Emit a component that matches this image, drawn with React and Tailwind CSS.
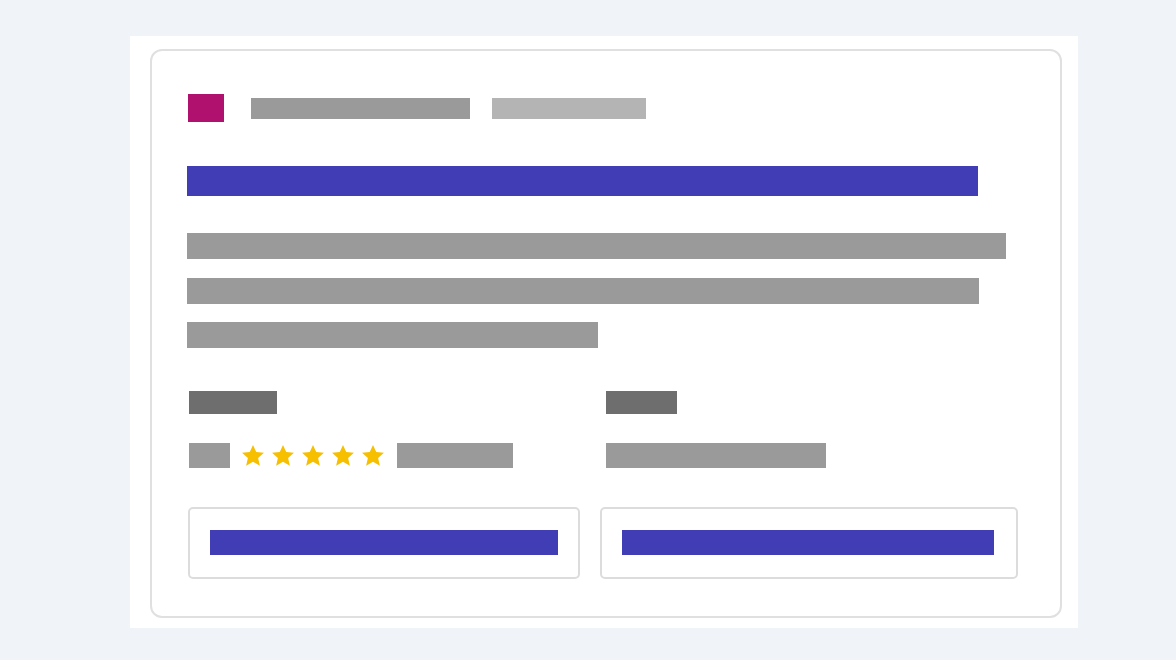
import React from "react";

function Star() {
  return (
    <svg width="26" height="25" viewBox="0 0 24 24" className="block">
      <path
        d="M12 1.8l3.1 6.9 7.4.7-5.6 5 1.7 7.4L12 17.9l-6.6 3.9 1.7-7.4-5.6-5 7.4-.7z"
        fill="#f6bf00"
      />
    </svg>
  );
}

export default function App() {
  return (
    <div className="w-[1176px] h-[660px] bg-[#f0f3f8] pt-[36px] pl-[130px]">
      <div className="w-[948px] h-[592px] bg-white pt-[13px] pl-[20px]">
        <div className="w-[912px] h-[569px] border-2 border-[#e0e0e0] rounded-[12px] pl-[35px] pt-[43px]">
          <div className="flex items-center">
            <div className="w-[36px] h-[28px] bg-[#b0106e] ml-[1px]" />
            <div className="w-[219px] h-[21px] bg-[#9a9a9a] ml-[27px]" />
            <div className="w-[154px] h-[21px] bg-[#b4b4b4] ml-[22px]" />
          </div>
          <div className="w-[791px] h-[30px] bg-[#413db5] mt-[44px]" />
          <div className="w-[819px] h-[26px] bg-[#9a9a9a] mt-[37px]" />
          <div className="w-[792px] h-[26px] bg-[#9a9a9a] mt-[19px]" />
          <div className="w-[411px] h-[26px] bg-[#9a9a9a] mt-[18px]" />
          <div className="flex mt-[43px]">
            <div className="w-[419px] pl-[2px]">
              <div className="w-[88px] h-[23px] bg-[#6e6e6e]" />
              <div className="flex items-start h-[25px] mt-[29px]">
                <div className="w-[41px] h-[25px] bg-[#9a9a9a]" />
                <div className="flex gap-[4px] ml-[10px]">
                  <Star />
                  <Star />
                  <Star />
                  <Star />
                  <Star />
                </div>
                <div className="w-[116px] h-[25px] bg-[#9a9a9a] ml-[11px]" />
              </div>
            </div>
            <div>
              <div className="w-[71px] h-[23px] bg-[#6e6e6e]" />
              <div className="w-[220px] h-[25px] bg-[#9a9a9a] mt-[29px]" />
            </div>
          </div>
          <div className="flex gap-[20px] mt-[39px] ml-[1px]">
            <div className="w-[392px] h-[72px] border-2 border-[#dcdcdc] rounded-[5px] pl-[20px] pt-[21px]">
              <div className="w-[348px] h-[25px] bg-[#413db5]" />
            </div>
            <div className="w-[418px] h-[72px] border-2 border-[#dcdcdc] rounded-[5px] pl-[20px] pt-[21px]">
              <div className="w-[372px] h-[25px] bg-[#413db5]" />
            </div>
          </div>
        </div>
      </div>
    </div>
  );
}
